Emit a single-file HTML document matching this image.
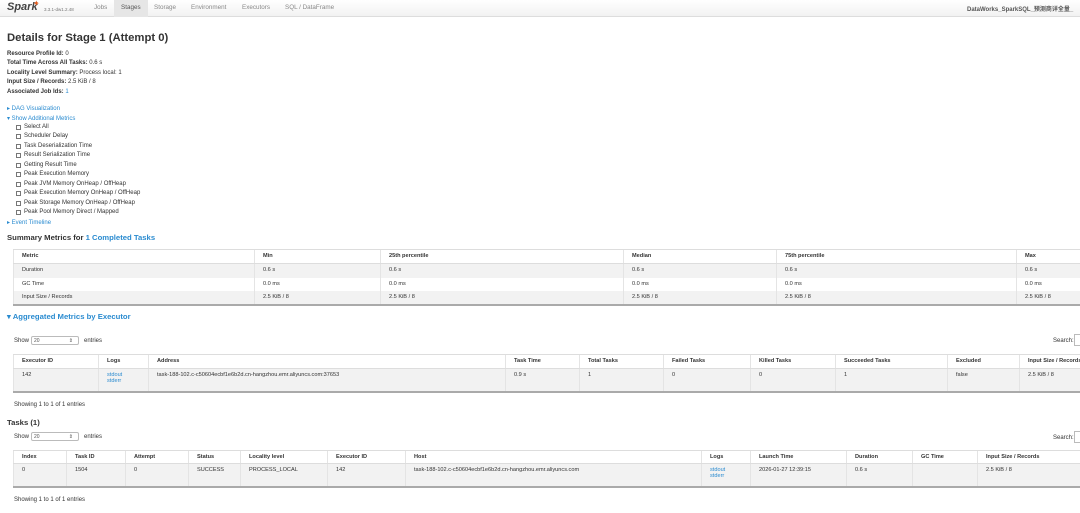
<!DOCTYPE html>
<html><head><meta charset="utf-8"><style>
*{margin:0;padding:0;box-sizing:border-box}
body{width:1080px;height:513px;overflow:hidden;background:#fff;font-family:"Liberation Sans","Noto Sans CJK SC",sans-serif;font-size:6px;color:#333;position:relative}
.a{position:absolute;white-space:nowrap}
.nav{position:absolute;left:0;top:0;width:1080px;height:17px;background:linear-gradient(#fff,#f2f2f2);border-bottom:1px solid #ddd}
.nav span{position:absolute;top:4px;font-size:6.3px;color:#888}
b{font-weight:bold;color:#333}
.lk{color:#2a8bd0}
.cb{position:absolute;left:16px;width:5px;height:5px;border:1px solid #777;background:#fff}
table{position:absolute;border-collapse:collapse;table-layout:fixed;font-size:5.6px}
td,th{text-align:left;vertical-align:top;padding:3px 0 0 8px;border-left:1px solid #e4e4e4;overflow:hidden;white-space:nowrap;font-weight:normal}
th{font-weight:bold;color:#333;border-top:1px solid #ddd;border-bottom:1px solid #ddd}
tr.g td{background:#f2f2f2}
table{border-bottom:2px solid #aaa}
.sel{position:absolute;width:48px;height:9px;border:1px solid #bbb;border-radius:2px;font-size:5px;padding:1px 2px;color:#555}
.sel:after{content:"⇕";position:absolute;right:5px;top:1px;font-size:5px}
</style></head><body>
<div class="nav">
<span style="left:7px;top:1px;font-size:11px;font-style:italic;font-weight:bold;color:#444">Spark</span>
<span style="left:33px;top:-1px;font-size:8px;color:#e25a1c">✦</span>
<span style="left:44px;top:7px;font-size:4.5px;color:#777">3.3.1-dw1.2.48</span>
<span style="left:94px">Jobs</span>
<div style="position:absolute;left:114px;top:0;width:34px;height:17px;background:#e6e6e6"></div>
<span style="left:121px;color:#555">Stages</span>
<span style="left:154px">Storage</span>
<span style="left:191px">Environment</span>
<span style="left:242px">Executors</span>
<span style="left:285px">SQL / DataFrame</span>
<span style="left:967px;font-weight:bold;color:#555;font-size:6px">DataWorks_SparkSQL_预测商详全量_</span>
</div>
<div class="a" style="left:7px;top:32px;font-size:11.3px;font-weight:bold;color:#333">Details for Stage 1 (Attempt 0)</div>
<div class="a" style="left:7px;top:51px"><b>Resource Profile Id:</b> 0</div>
<div class="a" style="left:7px;top:60px"><b>Total Time Across All Tasks:</b> 0.6 s</div>
<div class="a" style="left:7px;top:70px"><b>Locality Level Summary:</b> Process local: 1</div>
<div class="a" style="left:7px;top:79px"><b>Input Size / Records:</b> 2.5 KiB / 8</div>
<div class="a" style="left:7px;top:89px"><b>Associated Job Ids:</b> <span class="lk">1</span></div>
<div class="a lk" style="left:7px;top:105px">▸ DAG Visualization</div>
<div class="a lk" style="left:7px;top:115px">▾ Show Additional Metrics</div>
<div class="cb" style="top:125px"></div><div class="a" style="left:24px;top:124px">Select All</div>
<div class="cb" style="top:134px"></div><div class="a" style="left:24px;top:133px">Scheduler Delay</div>
<div class="cb" style="top:144px"></div><div class="a" style="left:24px;top:143px">Task Deserialization Time</div>
<div class="cb" style="top:153px"></div><div class="a" style="left:24px;top:152px">Result Serialization Time</div>
<div class="cb" style="top:163px"></div><div class="a" style="left:24px;top:162px">Getting Result Time</div>
<div class="cb" style="top:172px"></div><div class="a" style="left:24px;top:171px">Peak Execution Memory</div>
<div class="cb" style="top:182px"></div><div class="a" style="left:24px;top:181px">Peak JVM Memory OnHeap / OffHeap</div>
<div class="cb" style="top:191px"></div><div class="a" style="left:24px;top:190px">Peak Execution Memory OnHeap / OffHeap</div>
<div class="cb" style="top:201px"></div><div class="a" style="left:24px;top:200px">Peak Storage Memory OnHeap / OffHeap</div>
<div class="cb" style="top:210px"></div><div class="a" style="left:24px;top:209px">Peak Pool Memory Direct / Mapped</div>
<div class="a lk" style="left:7px;top:219px">▸ Event Timeline</div>
<div class="a" style="left:7px;top:233px;font-size:7.7px;font-weight:bold">Summary Metrics for <span class="lk">1 Completed Tasks</span></div>
<table style="left:13px;top:249px;width:1080px">
<colgroup><col style="width:241px"><col style="width:126px"><col style="width:243px"><col style="width:153px"><col style="width:240px"><col style="width:77px"></colgroup>
<tr style="height:14px"><th>Metric</th><th>Min</th><th>25th percentile</th><th>Median</th><th>75th percentile</th><th>Max</th></tr>
<tr class="g" style="height:14px"><td>Duration</td><td>0.6 s</td><td>0.6 s</td><td>0.6 s</td><td>0.6 s</td><td>0.6 s</td></tr>
<tr style="height:13px"><td>GC Time</td><td>0.0 ms</td><td>0.0 ms</td><td>0.0 ms</td><td>0.0 ms</td><td>0.0 ms</td></tr>
<tr class="g" style="height:14px"><td>Input Size / Records</td><td>2.5 KiB / 8</td><td>2.5 KiB / 8</td><td>2.5 KiB / 8</td><td>2.5 KiB / 8</td><td>2.5 KiB / 8</td></tr>
</table>
<div class="a lk" style="left:7px;top:312px;font-size:7.7px;font-weight:bold">▾ Aggregated Metrics by Executor</div>
<div class="a" style="left:14px;top:338px">Show</div><div class="sel" style="left:31px;top:336px">20</div><div class="a" style="left:84px;top:338px">entries</div>
<div class="a" style="left:1053px;top:338px">Search:</div><div style="position:absolute;left:1074px;top:334px;width:20px;height:12px;border:1px solid #bbb"></div>
<table style="left:13px;top:354px;width:1080px">
<colgroup><col style="width:85px"><col style="width:50px"><col style="width:357px"><col style="width:74px"><col style="width:84px"><col style="width:87px"><col style="width:85px"><col style="width:112px"><col style="width:72px"><col style="width:74px"></colgroup>
<tr style="height:14px"><th>Executor ID</th><th>Logs</th><th>Address</th><th>Task Time</th><th>Total Tasks</th><th>Failed Tasks</th><th>Killed Tasks</th><th>Succeeded Tasks</th><th>Excluded</th><th>Input Size / Records</th></tr>
<tr class="g" style="height:23px"><td>142</td><td><span class="lk">stdout<br>stderr</span></td><td>task-188-102.c-c50604ecbf1e6b2d.cn-hangzhou.emr.aliyuncs.com:37653</td><td>0.9 s</td><td>1</td><td>0</td><td>0</td><td>1</td><td>false</td><td>2.5 KiB / 8</td></tr>
</table>
<div class="a" style="left:14px;top:402px">Showing 1 to 1 of 1 entries</div>
<div class="a" style="left:7px;top:418px;font-size:7.7px;font-weight:bold">Tasks (1)</div>
<div class="a" style="left:14px;top:434px">Show</div><div class="sel" style="left:31px;top:432px">20</div><div class="a" style="left:84px;top:434px">entries</div>
<div class="a" style="left:1053px;top:435px">Search:</div><div style="position:absolute;left:1074px;top:431px;width:20px;height:12px;border:1px solid #bbb"></div>
<table style="left:13px;top:450px;width:1080px">
<colgroup><col style="width:53px"><col style="width:59px"><col style="width:63px"><col style="width:52px"><col style="width:87px"><col style="width:78px"><col style="width:296px"><col style="width:49px"><col style="width:96px"><col style="width:66px"><col style="width:65px"><col style="width:116px"></colgroup>
<tr style="height:13px"><th>Index</th><th>Task ID</th><th>Attempt</th><th>Status</th><th>Locality level</th><th>Executor ID</th><th>Host</th><th>Logs</th><th>Launch Time</th><th>Duration</th><th>GC Time</th><th>Input Size / Records</th></tr>
<tr class="g" style="height:23px"><td>0</td><td>1504</td><td>0</td><td>SUCCESS</td><td>PROCESS_LOCAL</td><td>142</td><td>task-188-102.c-c50604ecbf1e6b2d.cn-hangzhou.emr.aliyuncs.com</td><td><span class="lk">stdout<br>stderr</span></td><td>2026-01-27 12:39:15</td><td>0.6 s</td><td></td><td>2.5 KiB / 8</td></tr>
</table>
<div class="a" style="left:14px;top:497px">Showing 1 to 1 of 1 entries</div>
</body></html>
